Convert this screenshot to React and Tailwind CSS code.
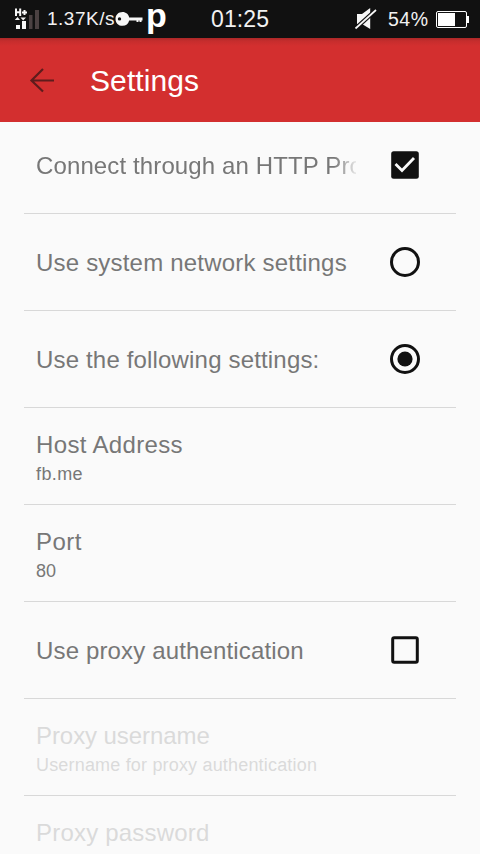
import React from 'react';
import clsx from 'clsx';

const StatusBar = () => {
  return (
    <div className="flex h-[38px] shrink-0 items-center bg-[#111111] text-[#f2f2f2]">
      <svg className="ml-[14px] h-[38px] w-[26px] shrink-0" viewBox="14 0 26 38" fill="none">
        <path d="M16 8.500v7.500M20.200 8.500v7.500M16 12.200h4M22 12.500h5M24.500 10v5" stroke="#f7f7f7" strokeWidth="2" />
        <path d="M14.800 20l2.700-3 2.500 3zM20.500 17.500h5.500L23.200 20.500z" fill="#f2f2f2" />
        <path d="M16 25h4v4h-4zM22 21h4v8h-4z" fill="#f7f7f7" />
        <path d="M29 15h3.500v14H29zM35 10h4v19h-4z" fill="#4b4142" />
      </svg>
      <span className="ml-[7px] w-[68px] whitespace-nowrap text-[19px] leading-[40px] tracking-[0.5px]">1.37K/s</span>
      <svg className="h-[38px] w-[29px] shrink-0" viewBox="115 0 29 38">
        <path
          fillRule="evenodd"
          d="M122.500 12c3.500 0 6 2.300 6.700 5.500h13.300v3h-1v1.500h-2v-1.500h-1v1.500h-2v-1.500h-7.300c-.8 3.300-3.200 5.300-6.700 5.300-4 0-7-2.800-7-6.900s3-6.900 7-6.900zM119.500 17.200a1.700 1.700 0 1 0 0 3.400 1.700 1.700 0 0 0 0-3.400z"
          fill="#f7f7f7"
        />
      </svg>
      <span className="-mt-[9px] ml-[2px] w-[22px] text-[34px] leading-[40px] font-bold text-white">p</span>
      <span className="ml-[43px] w-[62px] whitespace-nowrap text-[23px] leading-[38px] tracking-[0.1px]">01:25</span>
      <svg className="ml-[81px] h-[38px] w-[24px] shrink-0" viewBox="354 0 24 38">
        <path d="M357 14h5l8.200-6v21l-8.200-5h-5z" fill="#f7f7f7" />
        <path d="M355 29L376.500 9.500" stroke="#111111" strokeWidth="4.200" />
        <path d="M355.500 28.500L376 10" stroke="#f7f7f7" strokeWidth="1.700" />
      </svg>
      <span className="ml-[10px] w-[48px] whitespace-nowrap text-[19.5px] leading-[37px] tracking-[0.5px]">54%</span>
      <div className="flex h-[17px] w-[31px] shrink-0 rounded-[2px] border border-white p-[1px]">
        <div className="w-[17px] bg-white" />
      </div>
      <div className="h-[7px] w-[2px] bg-white" />
    </div>
  );
};

const Checkbox = ({ checked }) => {
  return (
    <svg className="h-[30px] w-[30px]" viewBox="0 0 30 30" fill="none">
      {checked ? (
        <>
          <rect x="1.200" y="1.200" width="27.600" height="27.600" rx="2.500" fill="#111111" />
          <path d="M5.500 14l6.500 6.500L24 8" stroke="#fafafa" strokeWidth="2.800" />
        </>
      ) : (
        <rect x="2.700" y="2.700" width="24.600" height="24.600" rx="1.500" stroke="#111111" strokeWidth="3" />
      )}
    </svg>
  );
};

const Radio = ({ checked }) => {
  return (
    <svg className="h-[30px] w-[30px]" viewBox="0 0 30 30" fill="none">
      <circle cx="15" cy="15" r="13.500" stroke="#111111" strokeWidth="3" />
      {checked && <circle cx="15" cy="15" r="7.600" fill="#111111" />}
    </svg>
  );
};

const Row = ({ title, titleClass, summary, summaryClass, disabled, children }) => {
  return (
    <div
      className={clsx(
        'flex h-[97px] shrink-0 items-center border-b border-[#d8d8d8] pl-3',
        disabled ? 'text-[#dadada]' : 'text-[#777777]'
      )}
    >
      <div className={clsx('w-[320px] whitespace-nowrap', summary ? 'pt-[4px]' : 'pt-[2px]')}>
        <div className={clsx('text-[24px] leading-[32px]', titleClass)}>{title}</div>
        {summary && <div className={clsx('text-[18px] leading-[26px]', summaryClass)}>{summary}</div>}
      </div>
      {children && <div className="ml-[34px]">{children}</div>}
    </div>
  );
};

const App = () => {
  return (
    <div className="flex h-[854px] w-[480px] flex-col overflow-hidden bg-[#fafafa] font-['Liberation_Sans',Arial,sans-serif]">
      <StatusBar />

      <header className="flex h-[84px] shrink-0 items-center bg-[linear-gradient(#ab2828,#c62d2d_3px,#d32f2f_8px)]">
        <svg className="ml-[29px] h-[26px] w-[26px]" viewBox="0 0 26 26" fill="none">
          <path d="M14 2L2.500 13.500 14 24.500M2.500 13.500H25" stroke="#5e1c1c" strokeWidth="2.200" />
        </svg>
        <h1 className="ml-[35px] text-[30px] tracking-[0.1px] text-white">Settings</h1>
      </header>

      <main className="min-h-0 flex-1 overflow-hidden px-6">
        <div className="-mt-[5px] flex flex-col">
          <Row
            title="Connect through an HTTP Proxy"
            titleClass="overflow-hidden tracking-[0.12px] mask-r-from-[298px] mask-r-to-[324px]"
          >
            <Checkbox checked />
          </Row>
          <Row title="Use system network settings" titleClass="tracking-[0.2px]">
            <Radio />
          </Row>
          <Row title="Use the following settings:" titleClass="tracking-[0.17px]">
            <Radio checked />
          </Row>
          <Row title="Host Address" titleClass="tracking-[0.35px]" summary="fb.me" summaryClass="tracking-[0.4px]" />
          <Row title="Port" titleClass="tracking-[0.5px]" summary="80" />
          <Row title="Use proxy authentication" titleClass="tracking-[0.15px]">
            <Checkbox />
          </Row>
          <Row
            title="Proxy username"
            titleClass="tracking-[-0.07px]"
            summary="Username for proxy authentication"
            summaryClass="tracking-[0.18px]"
            disabled
          />
          <Row title="Proxy password" titleClass="tracking-[0.2px]" summary={'\u00A0'} disabled />
        </div>
      </main>
    </div>
  );
};

export default App;
